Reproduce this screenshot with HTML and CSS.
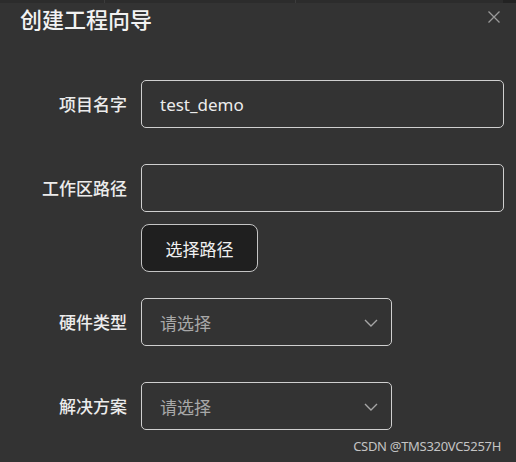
FILE: index.html
```html
<!DOCTYPE html>
<html lang="zh-CN">
<head>
<meta charset="utf-8">
<title>创建工程向导</title>
<link rel="stylesheet" href="styles.css">
</head>
<body>
<div class="dialog">
  <div class="topstrip">
    <span class="seg seg-a"></span>
    <span class="seg seg-b"></span>
    <span class="seg seg-c"></span>
    <span class="seg seg-d"></span>
  </div>
  <header class="header">
    <h1 class="title">创建工程向导</h1>
    <button class="close" aria-label="关闭">
      <svg width="12" height="12" viewBox="0 0 12 12"><path d="M0.5 0.5 L11.5 11.5 M11.5 0.5 L0.5 11.5" stroke="#9a9a9a" stroke-width="1.3" fill="none"/></svg>
    </button>
  </header>
  <form class="form">
    <div class="row row-gap">
      <label class="label">项目名字</label>
      <div class="field">
        <div class="input"><span class="value">test_demo</span></div>
      </div>
    </div>
    <div class="row row-gap-sm">
      <label class="label label-top">工作区路径</label>
      <div class="field field-stack">
        <div class="input"></div>
        <button type="button" class="btn">选择路径</button>
      </div>
    </div>
    <div class="row row-gap">
      <label class="label">硬件类型</label>
      <div class="field">
        <div class="select"><span class="placeholder">请选择</span>
          <svg class="chev" width="14" height="8" viewBox="0 0 14 8"><path d="M1 1 L7 7 L13 1" stroke="#a6a6a6" stroke-width="1.4" fill="none"/></svg>
        </div>
      </div>
    </div>
    <div class="row">
      <label class="label">解决方案</label>
      <div class="field">
        <div class="select"><span class="placeholder">请选择</span>
          <svg class="chev" width="14" height="8" viewBox="0 0 14 8"><path d="M1 1 L7 7 L13 1" stroke="#a6a6a6" stroke-width="1.4" fill="none"/></svg>
        </div>
      </div>
    </div>
  </form>
  <div class="watermark">CSDN @TMS320VC5257H</div>
</div>
</body>
</html>
```
FILE: styles.css
```css
* { box-sizing: border-box; }
html, body {
  margin: 0;
  padding: 0;
  background: #333333;
}
body {
  width: 516px;
  height: 462px;
  overflow: hidden;
  font-family: "Noto Sans", "Noto Sans CJK SC", sans-serif;
  color: #e8e8e8;
}
.dialog {
  position: relative;
  width: 516px;
  height: 462px;
  background: #333333;
}
.topstrip {
  display: flex;
  height: 3px;
}
.seg { height: 3px; background: #2c2c2c; }
.seg-a { width: 105px; border-right: 1px solid #3c3c3c; }
.seg-b { width: 191px; border-right: 1px solid #3c3c3c; }
.seg-c { flex: 1; }
.seg-d { width: 13px; background: #232323; }
.header {
  display: flex;
  align-items: center;
  justify-content: space-between;
  height: 30px;
  padding: 0 16px 0 20px;
}
.title {
  margin: 0;
  font-size: 22px;
  font-weight: 500;
  line-height: 30px;
  color: #f2f2f2;
  font-family: "Noto Sans CJK SC", sans-serif;
}
.close {
  display: flex;
  align-items: center;
  justify-content: center;
  width: 12px;
  height: 12px;
  padding: 0;
  margin-top: -2px;
  border: 0;
  background: transparent;
}
.form {
  display: flex;
  flex-direction: column;
  margin-top: 47px;
}
.row {
  display: grid;
  grid-template-columns: 127px 1fr;
  column-gap: 14px;
  align-items: start;
}
.row-gap { margin-bottom: 36px; }
.row-gap-sm { margin-bottom: 26px; }
.label {
  text-align: right;
  font-family: "Noto Sans CJK SC", sans-serif;
  font-size: 17px;
  font-weight: 500;
  line-height: 48px;
  color: #ececec;
}
.field { display: flex; }
.field-stack { flex-direction: column; align-items: flex-start; gap: 12px; }
.input {
  width: 363px;
  height: 48px;
  border: 1px solid #cfcfcf;
  border-radius: 5px;
  display: flex;
  align-items: center;
  padding-left: 18px;
}
.value {
  font-size: 17px;
  color: #ececec;
}
.btn {
  width: 117px;
  height: 48px;
  background: #1f1f1f;
  border: 1px solid #c4c4c4;
  border-radius: 8px;
  color: #f0f0f0;
  font-family: "Noto Sans CJK SC", sans-serif;
  font-size: 17px;
  padding: 0;
}
.select {
  width: 251px;
  height: 48px;
  border: 1px solid #cfcfcf;
  border-radius: 5px;
  display: flex;
  align-items: center;
  justify-content: space-between;
  padding: 0 13px 0 18px;
}
.placeholder {
  font-family: "Noto Sans CJK SC", sans-serif;
  font-size: 17px;
  color: #a8a8a8;
}
.chev { display: block; margin-top: 1px; }
.watermark {
  position: absolute;
  right: 15px;
  top: 436px;
  font-size: 13px;
  letter-spacing: -0.3px;
  color: #c4c4c4;
  line-height: 20px;
}
```
